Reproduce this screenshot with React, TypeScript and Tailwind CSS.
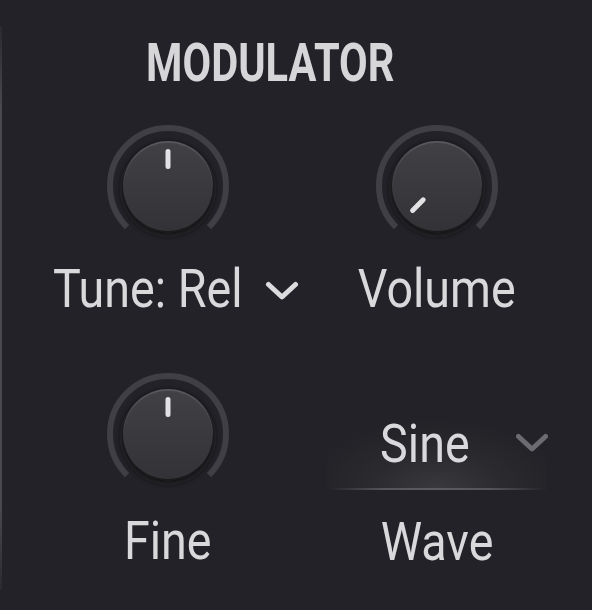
import React from "react";

const FONT = { fontFamily: "Roboto, 'Liberation Sans', sans-serif" };

function Knob({ angle, id }: { angle: number; id: string }) {
  return (
    <svg width="130" height="130" viewBox="0 0 130 130" className="block">
      <defs>
        <linearGradient id={`body-${id}`} x1="0" y1="0" x2="0" y2="1">
          <stop offset="0" stopColor="#414045" />
          <stop offset="1" stopColor="#333236" />
        </linearGradient>
        <linearGradient id={`rim-${id}`} x1="0" y1="0" x2="0" y2="1">
          <stop offset="0" stopColor="#59585d" />
          <stop offset="0.5" stopColor="#3b3a3f" />
          <stop offset="1" stopColor="#2e2d31" />
        </linearGradient>
        <filter id={`shadow-${id}`} x="-30%" y="-30%" width="160%" height="160%">
          <feGaussianBlur stdDeviation="3" />
        </filter>
      </defs>
      {/* track */}
      <path
        d="M 23.99 106.01 A 58 58 0 1 1 106.01 106.01"
        fill="none"
        stroke="#403f45"
        strokeWidth="6"
      />
      {/* shadow */}
      <circle cx="65" cy="68" r="46" fill="#151418" filter={`url(#shadow-${id})`} />
      {/* body */}
      <circle cx="65" cy="65" r="45" fill={`url(#rim-${id})`} />
      <circle cx="65" cy="65.8" r="44" fill={`url(#body-${id})`} />
      {/* pointer */}
      <rect
        x="62.5"
        y="28"
        width="5"
        height="20"
        rx="2.5"
        fill="#e2e2e4"
        transform={`rotate(${angle} 65 65)`}
      />
    </svg>
  );
}

function Chevron({ color }: { color: string }) {
  return (
    <svg width="34" height="20" viewBox="0 0 34 20" className="block">
      <polyline
        points="3.5,3.5 17,16 30.5,3.5"
        fill="none"
        stroke={color}
        strokeWidth="5"
        strokeLinecap="round"
        strokeLinejoin="round"
      />
    </svg>
  );
}

function Label({ children }: { children: React.ReactNode }) {
  return (
    <span
      className="inline-block text-[53px] leading-[53px] text-[#d9d9dc] scale-x-[0.88] whitespace-nowrap"
      style={FONT}
    >
      {children}
    </span>
  );
}

export default function App() {
  return (
    <div className="w-[592px] h-[610px] bg-[#232228] flex overflow-hidden">
      {/* panel edge */}
      <div className="w-[2px] mt-[26px] mb-[20px] bg-[linear-gradient(180deg,#2b2a30,#4a4950_15%,#4a4950_85%,#2b2a30)]" />

      <div className="flex-1 flex flex-col">
        <div className="h-[36px]" />
        <div className="flex justify-center pr-[54px]">
          <span
            className="inline-block text-[54px] leading-[54px] font-bold text-[#d6d6d9] scale-x-[0.77]"
            style={FONT}
          >
            MODULATOR
          </span>
        </div>

        <div className="grid grid-cols-[268px_270px] pl-[32px] mt-[31px]">
          {/* row 1 */}
          <div className="flex flex-col items-center">
            <Knob angle={0} id="tune" />
            <div className="flex items-center mt-[12px] ml-[16px]">
              <div className="-mx-[13px]">
                <Label>Tune: Rel</Label>
              </div>
              <div className="ml-[22px] mt-[2px]">
                <Chevron color="#dcdcdf" />
              </div>
            </div>
          </div>
          <div className="flex flex-col items-center">
            <Knob angle={-135} id="vol" />
            <div className="mt-[12px]">
              <Label>Volume</Label>
            </div>
          </div>

          {/* row 2 */}
          <div className="flex flex-col items-center mt-[53px]">
            <Knob angle={0} id="fine" />
            <div className="mt-[16px]">
              <Label>Fine</Label>
            </div>
          </div>
          <div className="flex flex-col items-center mt-[84px]">
            <div className="relative w-[220px] h-[90px] flex flex-col bg-[radial-gradient(ellipse_60%_80%_at_50%_100%,#3a393e_0%,#2b2a2f_50%,#252429_85%,#232228_100%)]">
              <div className="flex-1 flex items-start justify-center pt-[18px] pr-[24px]">
                <Label>Sine</Label>
              </div>
              <div className="absolute right-[-2px] top-[33px]">
                <Chevron color="#6c6b71" />
              </div>
              <div className="h-[2px] mx-[4px] bg-[linear-gradient(90deg,transparent,#55545a_25%,#5c5b61_50%,#55545a_75%,transparent)]" />
            </div>
            <div className="mt-[26px]">
              <Label>Wave</Label>
            </div>
          </div>
        </div>
      </div>
    </div>
  );
}
